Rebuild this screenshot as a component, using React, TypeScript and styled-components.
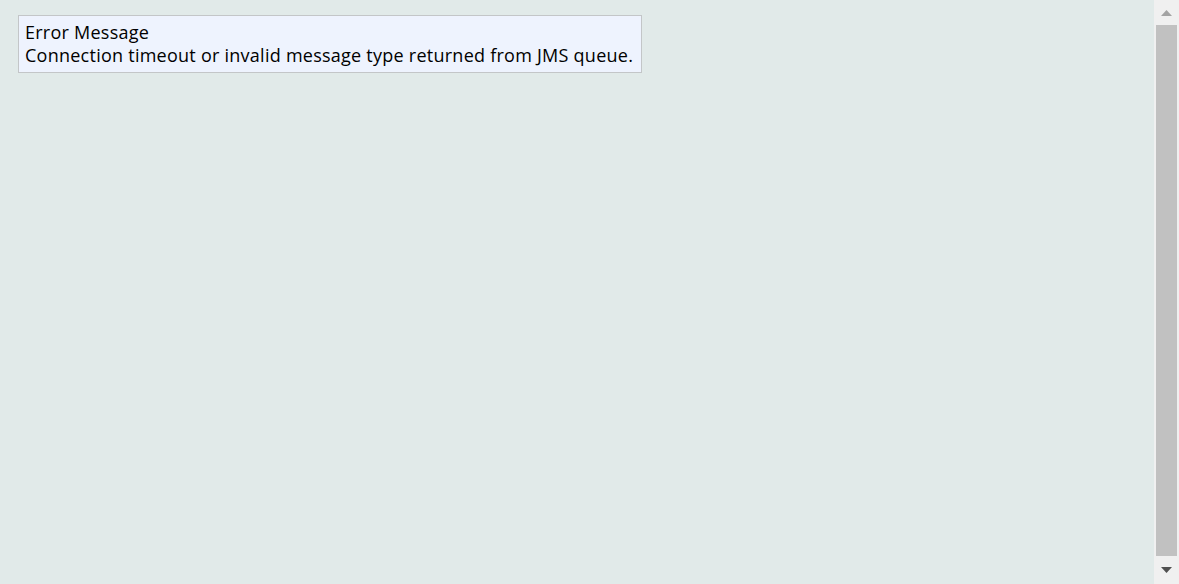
import React from "react";
import styled, { createGlobalStyle } from "styled-components";

const Global = createGlobalStyle`
  html, body { margin: 0; padding: 0; height: 100%; overflow: hidden; }
  body { background: #e1eae9; }
`;

const Page = styled.div`
  display: flex;
  height: 584px;
  width: 100%;
`;

const Main = styled.main`
  flex: 1;
  padding: 15px 18px;
  box-sizing: border-box;
  background: #e1eae9;
`;

const MessageBox = styled.div`
  display: inline-block;
  width: 624px;
  height: 58px;
  box-sizing: border-box;
  padding: 5px 6px;
  background: #eef3fe;
  border: 1px solid #c3c6c8;
  font-family: "Open Sans", "DejaVu Sans", sans-serif;
  font-size: 18px;
  letter-spacing: 0.25px;
  line-height: 23px;
  color: #000;
  white-space: nowrap;
`;

const Line = styled.div``;

const Scrollbar = styled.div`
  width: 25px;
  display: flex;
  flex-direction: column;
  background: #f0f0f0;
`;

const ArrowButton = styled.div<{ $h: number }>`
  height: ${(p) => p.$h}px;
  display: flex;
  align-items: center;
  justify-content: center;
`;

const Track = styled.div`
  flex: 1;
  padding: 0 2px 0 2px;
  display: flex;
`;

const Thumb = styled.div`
  flex: 1;
  background: #c1c1c1;
`;

export default function App() {
  return (
    <>
      <Global />
      <Page>
        <Main>
          <MessageBox>
            <Line>Error Message</Line>
            <Line>Connection timeout or invalid message type returned from JMS queue.</Line>
          </MessageBox>
        </Main>
        <Scrollbar>
          <ArrowButton $h={25}>
            <svg width="11" height="6" viewBox="0 0 11 6">
              <polygon points="5.5,0 11,6 0,6" fill="#a3a3a3" />
            </svg>
          </ArrowButton>
          <Track>
            <Thumb />
          </Track>
          <ArrowButton $h={28}>
            <svg width="11" height="6" viewBox="0 0 11 6">
              <polygon points="0,0 11,0 5.5,6" fill="#505050" />
            </svg>
          </ArrowButton>
        </Scrollbar>
      </Page>
    </>
  );
}
